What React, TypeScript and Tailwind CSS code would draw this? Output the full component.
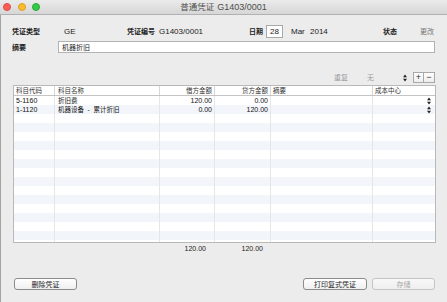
import React from "react";

const font = "font-['Liberation_Sans','Noto_Sans_CJK_SC',sans-serif]";
const cols = "grid grid-cols-[41px_105px_55px_56px_102px_62px]";

type Row = { code: string; name: string; debit: string; credit: string };

const rows: Row[] = [
  { code: "5-1160", name: "折旧费", debit: "120.00", credit: "0.00" },
  { code: "1-1120", name: "机器设备 \u00a0-\u00a0 累计折旧", debit: "0.00", credit: "120.00" },
];

function UpDown() {
  return (
    <svg width="4" height="8" viewBox="0 0 4 8">
      <polygon points="0,3.3 2,0.5 4,3.3" fill="#222" />
      <polygon points="0,4.7 2,7.5 4,4.7" fill="#222" />
    </svg>
  );
}

function Light({ c, b }: { c: string; b: string }) {
  return <div className={"w-[8px] h-[8px] rounded-full border-[0.5px] " + c + " " + b} />;
}

export default function App() {
  const blank = Array.from({ length: 16 }, (_, i) => rows[i]);

  return (
    <div className={"w-[447px] h-[302px] overflow-hidden bg-[#ececec] flex flex-col " + font}>
      {/* title bar */}
      <div className="h-[15px] shrink-0 relative flex items-center bg-gradient-to-b from-[#ebebeb] to-[#d6d6d6] border-b border-[#b1b1b1]">
        <div className="flex items-center gap-[6.5px] pl-[3px]">
          <Light c="bg-[#fc5f57]" b="border-[#de4a43]" />
          <Light c="bg-[#fdbb2e]" b="border-[#dea123]" />
          <Light c="bg-[#35c94a]" b="border-[#27aa35]" />
        </div>
        <div className="absolute inset-0 flex items-center justify-center text-[#4d4d4d]">
          <span className="text-[8.5px] leading-none">普通凭证</span>
          <span className="text-[9px] leading-none ml-[3px]">G1403/0001</span>
        </div>
      </div>

      <div className="flex-1 flex flex-col border-l border-[#a3a3a3] pl-[11px] pr-[12px]">
        {/* row 1 */}
        <div className="mt-[10px] h-[13px] flex items-center text-[#222] text-[8px] leading-none">
          <span className="w-[52px] shrink-0 text-[7px] font-bold">凭证类型</span>
          <span className="w-[63px] shrink-0">GE</span>
          <span className="w-[32px] shrink-0 text-[7px] font-bold">凭证编号</span>
          <span className="w-[90px] shrink-0">G1403/0001</span>
          <span className="w-[17px] shrink-0 text-[7px] font-bold">日期</span>
          <span className="w-[17px] h-[13px] shrink-0 bg-white border border-[#a9a9a9] flex items-center justify-center">28</span>
          <span className="w-[19px] ml-[8px] shrink-0">Mar</span>
          <span className="w-[73px] shrink-0">2014</span>
          <span className="w-[37px] shrink-0 text-[7px] font-bold">状态</span>
          <span className="text-[7px] text-[#777]">更改</span>
        </div>

        {/* row 2 */}
        <div className="mt-[3px] h-[12px] flex items-center">
          <span className="w-[46px] shrink-0 text-[7px] font-bold text-[#222] leading-none">摘要</span>
          <div className="flex-1 h-[12px] bg-white border border-[#b3b3b3] flex items-center pl-[3px] text-[7px] text-[#222] leading-none">
            机器折旧
          </div>
        </div>

        {/* repeat row */}
        <div className="mt-[19px] h-[11px] flex items-center justify-end text-[7px] text-[#9a9a9a] leading-none">
          <span className="w-[33px]">重复</span>
          <span className="w-[36px]">无</span>
          <span className="w-[10px] flex items-center"><UpDown /></span>
          <div className="w-[11px] h-[11px] border border-[#a8a8a8] bg-gradient-to-b from-white to-[#ededed] flex items-center justify-center text-[9px] text-[#333]">+</div>
          <div className="w-[11px] h-[11px] border border-l-0 border-[#a8a8a8] bg-gradient-to-b from-white to-[#ededed] flex items-center justify-center text-[9px] text-[#333]">−</div>
        </div>

        {/* table */}
        <div className="mt-[2px] ml-[1px] w-[423px] border border-[#b9b9b9] bg-white">
          <div className={cols + " h-[10px] border-b border-[#c4c4c4] text-[6.5px] text-[#333] leading-[9px]"}>
            <div className="pl-[2px] border-r border-[#d6d6d6]">科目代码</div>
            <div className="pl-[3px] border-r border-[#d6d6d6]">科目名称</div>
            <div className="pr-[2px] text-right border-r border-[#d6d6d6]">借方金额</div>
            <div className="pr-[2px] text-right border-r border-[#d6d6d6]">贷方金额</div>
            <div className="pl-[2px] border-r border-[#d6d6d6]">摘要</div>
            <div className="pl-[2px]">成本中心</div>
          </div>
          {blank.map((r, i) => (
            <div
              key={i}
              className={cols + " h-[9px] text-[7px] leading-[9px] text-[#111] " + (i % 2 === 1 ? "bg-[#f2f5fa]" : "bg-white")}
            >
              <div className="pl-[2px] border-r border-[#e6e6e6]">{r?.code}</div>
              <div className="pl-[3px] border-r border-[#e6e6e6] text-[6.5px]">{r?.name}</div>
              <div className="pr-[2px] text-right border-r border-[#e6e6e6]">{r?.debit}</div>
              <div className="pr-[2px] text-right border-r border-[#e6e6e6]">{r?.credit}</div>
              <div className="border-r border-[#e6e6e6]" />
              <div className="flex items-center justify-end pr-[4px]">{r ? <UpDown /> : null}</div>
            </div>
          ))}
          <div className={cols + " h-[2px] bg-white"}>
            <div className="border-r border-[#e6e6e6]" />
            <div className="border-r border-[#e6e6e6]" />
            <div className="border-r border-[#e6e6e6]" />
            <div className="border-r border-[#e6e6e6]" />
            <div className="border-r border-[#e6e6e6]" />
            <div />
          </div>
        </div>

        {/* totals */}
        <div className={cols + " mt-[1px] ml-[2px] h-[10px] text-[7px] leading-[10px] text-[#222]"}>
          <div />
          <div />
          <div className="pr-[9px] text-right">120.00</div>
          <div className="pr-[8px] text-right">120.00</div>
        </div>

        {/* buttons */}
        <div className="mt-[24px] flex items-center text-[7px] leading-none">
          <button className="ml-[2px] w-[63px] h-[12px] rounded-[3px] border border-[#8c8c8c] bg-gradient-to-b from-white to-[#f0f0f0] text-[#222]">
            删除凭证
          </button>
          <div className="flex-1" />
          <button className="w-[64px] h-[12px] rounded-[3px] border border-[#8c8c8c] bg-gradient-to-b from-white to-[#f0f0f0] text-[#222]">
            打印复式凭证
          </button>
          <button className="ml-[5px] w-[63px] h-[12px] rounded-[3px] border border-[#c4c4c4] bg-gradient-to-b from-[#f8f8f8] to-[#efefef] text-[#a8a8a8]">
            存储
          </button>
        </div>
      </div>
    </div>
  );
}
